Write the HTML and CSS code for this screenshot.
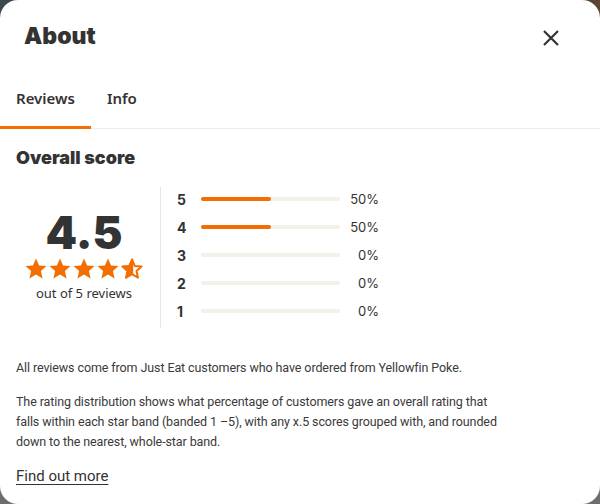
FILE: index.html
```html
<!DOCTYPE html>
<html lang="en">
<head>
<meta charset="utf-8">
<title>About</title>
<link rel="stylesheet" href="styles.css">
</head>
<body>
<div class="modal">
  <header class="modal-header">
    <h1 class="title">About</h1>
    <button class="close" aria-label="Close">
      <svg width="16" height="16" viewBox="0 0 16 16"><path d="M1 1 L15 15 M15 1 L1 15" stroke="#333" stroke-width="2.2" stroke-linecap="butt"/></svg>
    </button>
  </header>
  <nav class="tabs">
    <span class="tab active">Reviews</span>
    <span class="tab">Info</span>
  </nav>
  <section class="content">
    <h2 class="subtitle">Overall score</h2>
    <div class="score">
      <div class="summary">
        <div class="big">4.5</div>
        <div class="stars">
          <svg viewBox="0 0 24 24"><path class="s" d="M12 1.5l3.1 7 7.4.6-5.6 4.9 1.7 7.4L12 17.5l-6.6 3.9 1.7-7.4-5.6-4.9 7.4-.6z"/></svg>
          <svg viewBox="0 0 24 24"><path class="s" d="M12 1.5l3.1 7 7.4.6-5.6 4.9 1.7 7.4L12 17.5l-6.6 3.9 1.7-7.4-5.6-4.9 7.4-.6z"/></svg>
          <svg viewBox="0 0 24 24"><path class="s" d="M12 1.5l3.1 7 7.4.6-5.6 4.9 1.7 7.4L12 17.5l-6.6 3.9 1.7-7.4-5.6-4.9 7.4-.6z"/></svg>
          <svg viewBox="0 0 24 24"><path class="s" d="M12 1.5l3.1 7 7.4.6-5.6 4.9 1.7 7.4L12 17.5l-6.6 3.9 1.7-7.4-5.6-4.9 7.4-.6z"/></svg>
          <svg viewBox="0 0 24 24"><path class="o" d="M12 2.6l2.8 6.3 6.8.6-5.1 4.5 1.5 6.7L12 17.2l-6 3.5 1.5-6.7-5.1-4.5 6.8-.6z"/><path class="s" d="M12 1.5 L8.9 8.5 L1.5 9.1 L7.1 14 L5.4 21.4 L12 17.5 L13.2 17.5 L13.2 1.5 Z"/></svg>
        </div>
        <div class="count">out of 5 reviews</div>
      </div>
      <div class="bars">
        <div class="row"><span class="num">5</span><span class="track"><span class="fill" style="width:50%"></span></span><span class="pct">50%</span></div>
        <div class="row"><span class="num">4</span><span class="track"><span class="fill" style="width:50%"></span></span><span class="pct">50%</span></div>
        <div class="row"><span class="num">3</span><span class="track"></span><span class="pct">0%</span></div>
        <div class="row"><span class="num">2</span><span class="track"></span><span class="pct">0%</span></div>
        <div class="row"><span class="num">1</span><span class="track"></span><span class="pct">0%</span></div>
      </div>
    </div>
    <p class="para first">All reviews come from Just Eat customers who have ordered from Yellowfin Poke.</p>
    <p class="para">The rating distribution shows what percentage of customers gave an overall rating that falls within each star band (banded 1 –5), with any x.5 scores grouped with, and rounded down to the nearest, whole-star band.</p>
    <a class="more" href="#">Find out more</a>
  </section>
</div>
</body>
</html>
```
FILE: styles.css
```css
* { box-sizing: border-box; }
html, body { margin: 0; padding: 0; height: 100%; }
body {
  background:
    linear-gradient(to right, #3b4a50 0%, #3b4a50 50%, #5c4630 50%, #5c4630 100%) top / 100% 50% no-repeat,
    #6e6e6e;
  font-family: "Roboto", "Noto Sans", sans-serif;
  color: #3a3a3a;
}
.modal {
  width: 600px;
  height: 504px;
  background: #fff;
  border-radius: 18px;
  overflow: hidden;
}
.modal-header {
  display: flex;
  align-items: center;
  justify-content: space-between;
  padding: 0 41px 0 24px;
  height: 72px;
}
.title {
  margin: 0;
  font-family: "Inter", sans-serif;
  font-weight: 900;
  font-size: 23px;
  color: #333;
}
.close {
  border: 0;
  background: none;
  padding: 0;
  width: 16px;
  height: 16px;
  display: flex;
  margin-top: 4px;
}
.tabs {
  display: flex;
  border-bottom: 1px solid #ececec;
  height: 57px;
  align-items: stretch;
}
.tab {
  font-family: "Noto Sans", sans-serif;
  font-size: 15px;
  font-weight: 600;
  color: #333;
  padding: 16px 16px 0;
}
.tab.active {
  border-bottom: 3px solid #f36d00;
  margin-bottom: -1px;
}
.content { padding: 0 16px; }
.subtitle {
  margin: 17px 0 0;
  font-family: "Inter", sans-serif;
  font-weight: 900;
  font-size: 18px;
  color: #333;
  line-height: 24px;
}
.score {
  display: flex;
  margin-top: 17px;
}
.summary {
  width: 144px;
  padding-right: 8px;
  display: flex;
  flex-direction: column;
  align-items: center;
  padding-top: 24px;
}
.big {
  font-family: "Inter", sans-serif;
  font-weight: 900;
  font-size: 45px;
  line-height: 44px;
  color: #333;
}
.stars {
  display: flex;
  gap: 0;
  margin-top: 2px;
}
.stars svg { width: 24px; height: 24px; }
.stars .s { fill: #f36d00; }
.stars .o { fill: #fff; stroke: #f36d00; stroke-width: 2; stroke-linejoin: round; }
.count {
  font-family: "Noto Sans", sans-serif;
  font-size: 13px;
  margin-top: 3px;
  color: #333;
}
.bars {
  border-left: 1px solid #e6e6e6;
  padding: 0 0 3px 16px;
  display: flex;
  flex-direction: column;
}
.row {
  display: flex;
  align-items: center;
  height: 28px;
  flex: none;
}
.row:first-child { margin-top: -2px; }
.num {
  width: 24px;
  font-family: "Inter", sans-serif;
  font-size: 14px;
  font-weight: 700;
  color: #333;
}
.track {
  width: 139px;
  height: 4px;
  border-radius: 2px;
  background: #f3efe9;
  display: block;
}
.fill {
  display: block;
  height: 4px;
  border-radius: 2px;
  background: #f36d00;
}
.pct {
  width: 39px;
  text-align: right;
  font-family: "Inter", sans-serif;
  font-size: 13px;
  color: #333;
}
.para {
  font-size: 12.5px;
  letter-spacing: -0.1px;
  line-height: 20px;
  margin: 0;
  max-width: 492px;
  color: #3a3a3a;
}
.para.first { margin-top: 30px; margin-bottom: 14px; }
.more {
  display: inline-block;
  margin-top: 15px;
  font-size: 15px;
  color: #333;
  text-decoration: underline;
  text-underline-offset: 3px;
}
```
